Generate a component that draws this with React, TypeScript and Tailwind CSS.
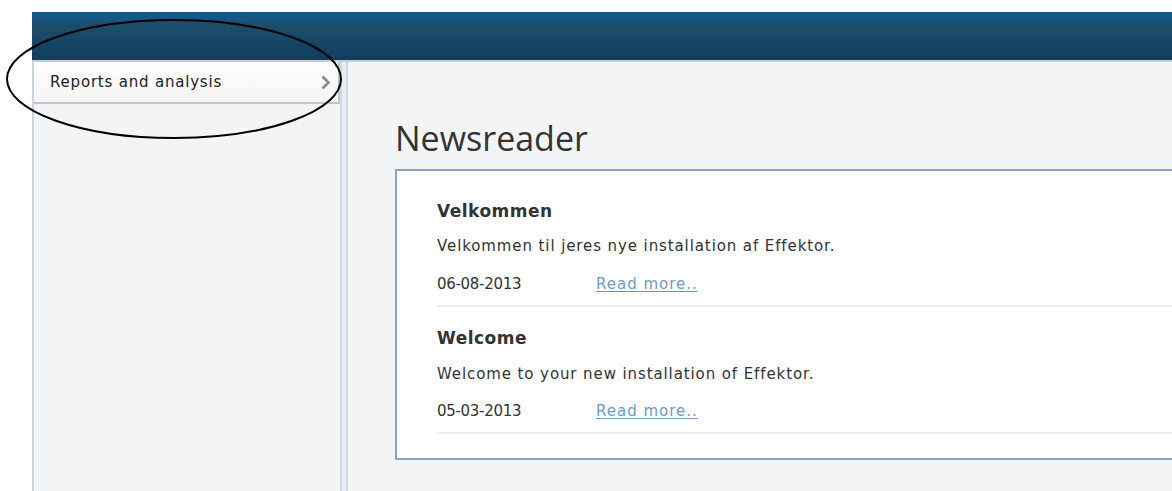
import React from 'react';

type NewsItem = {
  title: string;
  text: string;
  date: string;
};

const news: NewsItem[] = [
  { title: 'Velkommen', text: 'Velkommen til jeres nye installation af Effektor.', date: '06-08-2013' },
  { title: 'Welcome', text: 'Welcome to your new installation of Effektor.', date: '05-03-2013' },
];

const Chevron = () => (
  <svg width="11" height="15" viewBox="0 0 11 15" className="text-[#8c8c8c]">
    <path d="M2.5 1.5 L8.5 7.5 L2.5 13.5" fill="none" stroke="currentColor" strokeWidth="2.6" />
  </svg>
);

const NewsEntry = ({ item, first }: { item: NewsItem; first: boolean }) => (
  <div className={first ? 'pt-[28px]' : 'pt-[19px]'}>
    <h3 className="h-6 leading-6 text-[17px] font-bold tracking-[0.5px] text-[#333]">{item.title}</h3>
    <p className={`${first ? 'mt-[11px]' : 'mt-[12px]'} h-6 leading-6 text-[15px] tracking-[0.9px] text-[#333]`}>
      {item.text}
    </p>
    <div className={`${first ? 'mt-[14px]' : 'mt-[13px]'} flex h-6 items-center text-[15px] text-[#333]`}>
      <span className="w-[159px] tracking-[-0.3px]">{item.date}</span>
      <a href="#" className="tracking-[1px] text-[#6c9cc4] underline underline-offset-2">Read more..</a>
    </div>
    <div className="mt-[9px] h-[2px] bg-[#ececec]" />
  </div>
);

export default function App() {
  return (
    <div
      className="relative h-[491px] w-[1172px] overflow-hidden bg-white"
      style={{ fontFamily: '"DejaVu Sans", Verdana, sans-serif' }}
    >
      <div className="ml-[32px] mt-[12px] flex h-[479px] flex-col">
        {/* top bar */}
        <div className="h-[48px] shrink-0">
          <div className="h-[9px] bg-[#135886]" />
          <div className="h-[39px] bg-gradient-to-b from-[#1d506e] to-[#0f3d5d]" />
        </div>
        <div className="h-[2px] shrink-0 bg-[#c3cfdc]" />

        <div className="flex min-h-0 flex-1">
          {/* sidebar */}
          <aside className="w-[308px] shrink-0 border-l-2 border-[#c9d4e0] bg-[#f3f4f6]">
            <div className="flex h-[42px] items-center justify-between border-b-2 border-r-2 border-[#c6c6c6] bg-gradient-to-b from-white to-[#f4f4f4] pl-[16px] pr-[7px] text-[15px] tracking-[0.8px] text-[#222]">
              <span>Reports and analysis</span>
              <Chevron />
            </div>
          </aside>
          <div className="w-[8px] shrink-0 border-x-2 border-[#cfdae6] bg-[#e8edf5]" />

          {/* main */}
          <main className="min-w-0 flex-1 overflow-hidden bg-[#f3f4f6] pl-[47px]">
            <h1
              className="mt-[51px] text-[34px] leading-[50px] text-[#333]"
              style={{ fontFamily: '"Open Sans", sans-serif' }}
            >
              Newsreader
            </h1>
            <div className="mt-[6px] w-[900px] border-2 border-[#86a4c6] bg-white pb-[24px] pl-[40px]">
              {news.map((item, i) => (
                <NewsEntry key={item.date} item={item} first={i === 0} />
              ))}
            </div>
          </main>
        </div>
      </div>

      {/* hand-drawn highlight */}
      <svg className="pointer-events-none absolute left-0 top-0" width="360" height="150">
        <ellipse cx="174" cy="79" rx="167" ry="59" fill="none" stroke="#000" strokeWidth="2" />
      </svg>
    </div>
  );
}
